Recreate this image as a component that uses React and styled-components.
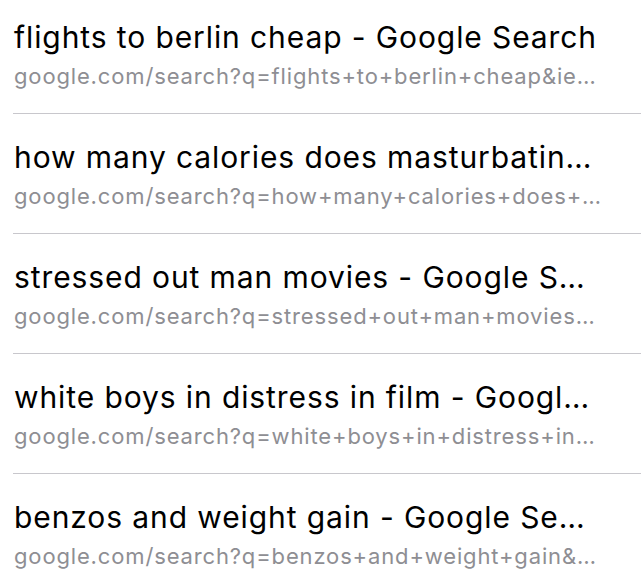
import React from 'react'
import styled, { createGlobalStyle } from 'styled-components'

const GlobalStyle = createGlobalStyle`
  html, body {
    margin: 0;
    padding: 0;
    background: #ffffff;
  }
  body {
    font-family: Inter, "Liberation Sans", sans-serif;
    -webkit-font-smoothing: antialiased;
  }
`

const history = [
    { title: 'flights to berlin cheap - Google Search', url: 'google.com/search?q=flights+to+berlin+cheap&ie…' },
    { title: 'how many calories does masturbatin…', url: 'google.com/search?q=how+many+calories+does+…' },
    { title: 'stressed out man movies - Google S…', url: 'google.com/search?q=stressed+out+man+movies…' },
    { title: 'white boys in distress in film - Googl…', url: 'google.com/search?q=white+boys+in+distress+in…' },
    { title: 'benzos and weight gain - Google Se…', url: 'google.com/search?q=benzos+and+weight+gain&…' },
]

function App() {
    return (
        <>
            <GlobalStyle />
            <HistoryList>
                {history.map((item, i) => (
                    <HistoryRow key={i} first={i === 0} last={i === history.length - 1}>
                        <Title>{item.title}</Title>
                        <Url>{item.url}</Url>
                    </HistoryRow>
                ))}
            </HistoryList>
        </>
    )
}

const HistoryList = styled.ul`
list-style: none;
margin: 0;
padding: 0 0 0 13px;
width: 641px;
box-sizing: border-box;
`

// the list is scrolled a little, so the first row is cut at the top
const HistoryRow = styled.li`
height: ${p => (p.first ? '114px' : '120px')};
box-sizing: border-box;
padding: ${p => (p.first ? '19px' : '25px')} 0 0 1px;
border-bottom: ${p => (p.last ? 'none' : '1px solid #c8c7cc')};
`

const Title = styled.div`
font-size: 30px;
line-height: 36px;
color: #000000;
letter-spacing: 0.9px;
white-space: nowrap;
`

const Url = styled.div`
margin-top: 7px;
font-size: 22px;
line-height: 28px;
color: #8e8e93;
letter-spacing: 0.85px;
white-space: nowrap;
`

export default App
